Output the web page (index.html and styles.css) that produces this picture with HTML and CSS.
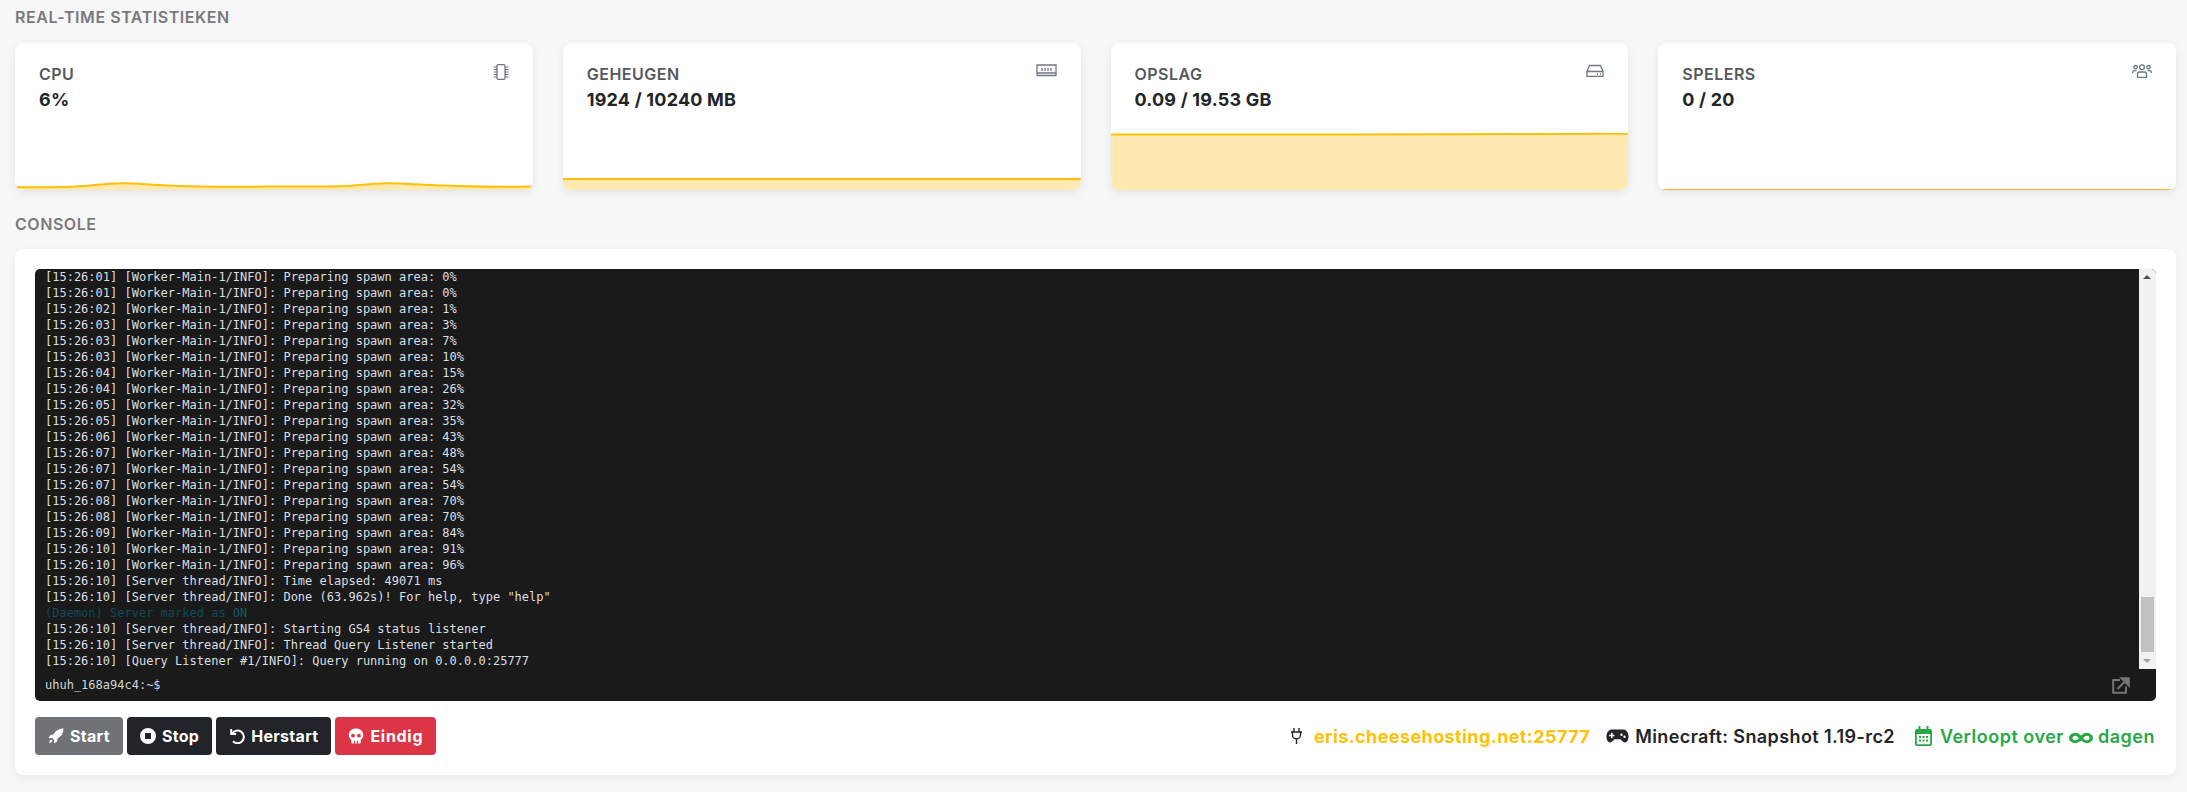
FILE: index.html
```html
<!DOCTYPE html>
<html lang="nl">
<head>
<meta charset="utf-8">
<title>Console</title>
<link rel="stylesheet" href="styles.css">
</head>
<body>
<main class="page">
  <h2 class="section-title first">REAL-TIME STATISTIEKEN</h2>
  <section class="stats">
    <article class="stat">
      <div class="stat-head">
        <div><div class="stat-label">CPU</div><div class="stat-value">6%</div></div>
        <svg class="stat-icon" width="16" height="16" viewBox="0 0 16 16"><rect x="4" y="0.700" width="8" height="14.600" rx="1.200"/><path class="pins" d="M0.500 3h3.500M0.500 5.500h3.500M0.500 8h3.500M0.500 10.500h3.500M0.500 13h3.500M12 3h3.500M12 5.500h3.500M12 8h3.500M12 10.500h3.500M12 13h3.500"/></svg>
      </div>
      <svg class="chart" viewBox="0 0 518 57" preserveAspectRatio="none"><path class="area" d="M0 54C30 54.500 60 54.500 80 52C95 50.200 110 49.800 125 50.800C150 53 190 54.500 250 53.500C290 53.300 325 54.500 345 52C360 50.200 375 49.800 395 51C430 53 470 54.500 518 53.500V57H0Z"/><path class="line" d="M0 54C30 54.500 60 54.500 80 52C95 50.200 110 49.800 125 50.800C150 53 190 54.500 250 53.500C290 53.300 325 54.500 345 52C360 50.200 375 49.800 395 51C430 53 470 54.500 518 53.500"/></svg>
    </article>
    <article class="stat">
      <div class="stat-head">
        <div><div class="stat-label">GEHEUGEN</div><div class="stat-value">1924 / 10240 MB</div></div>
        <svg class="stat-icon" width="21" height="13" viewBox="0 0 21 13"><path d="M1 1h19v8H1zM1 11.500h19M1 9v3M20 9v3M6 4v3M9 4v3M12 4v3M15 4v3"/></svg>
      </div>
      <svg class="chart" viewBox="0 0 518 57" preserveAspectRatio="none"><path class="area" d="M0 46H518V57H0Z"/><path class="line" d="M0 46H518"/></svg>
    </article>
    <article class="stat">
      <div class="stat-head">
        <div><div class="stat-label">OPSLAG</div><div class="stat-value">0.09 / 19.53 GB</div></div>
        <svg class="stat-icon" width="18" height="13" viewBox="0 0 18 13"><path d="M1 7.500 3.500 1.500h11L17 7.500M1 7.500h16v4.800H1zM11 10h1M14 10h1"/></svg>
      </div>
      <svg class="chart" viewBox="0 0 518 57" preserveAspectRatio="none"><path class="area" d="M0 1.500C100 1.500 180 1.600 240 1.500C300 0.800 400 0.700 518 0.700V57H0Z"/><path class="line" d="M0 1.500C100 1.500 180 1.600 240 1.500C300 0.800 400 0.700 518 0.700"/></svg>
    </article>
    <article class="stat">
      <div class="stat-head">
        <div><div class="stat-label">SPELERS</div><div class="stat-value">0 / 20</div></div>
        <svg class="stat-icon" width="20" height="14" viewBox="0 0 20 14"><circle cx="10" cy="3.200" r="2.400"/><circle cx="3.500" cy="3.200" r="1.700"/><circle cx="16.500" cy="3.200" r="1.700"/><path d="M5.500 13.300v-3c0-1.500 1-2.300 2.300-2.300h4.400c1.300 0 2.300.8 2.300 2.300v3zM.7 9V8.300C.7 7.200 1.500 6.700 2.500 6.700h2M19.300 9V8.300c0-1.100-.8-1.600-1.800-1.600h-2"/></svg>
      </div>
      <svg class="chart" viewBox="0 0 518 57" preserveAspectRatio="none"><path class="thin" d="M0 56.500H518"/></svg>
    </article>
  </section>

  <h2 class="section-title second">CONSOLE</h2>
  <section class="console-card">
    <div class="terminal">
      <div class="term-body">
        <div class="log">
          <div>[15:26:01] [Worker-Main-1/INFO]: Preparing spawn area: 0%</div>
          <div>[15:26:01] [Worker-Main-1/INFO]: Preparing spawn area: 0%</div>
          <div>[15:26:02] [Worker-Main-1/INFO]: Preparing spawn area: 1%</div>
          <div>[15:26:03] [Worker-Main-1/INFO]: Preparing spawn area: 3%</div>
          <div>[15:26:03] [Worker-Main-1/INFO]: Preparing spawn area: 7%</div>
          <div>[15:26:03] [Worker-Main-1/INFO]: Preparing spawn area: 10%</div>
          <div>[15:26:04] [Worker-Main-1/INFO]: Preparing spawn area: 15%</div>
          <div>[15:26:04] [Worker-Main-1/INFO]: Preparing spawn area: 26%</div>
          <div>[15:26:05] [Worker-Main-1/INFO]: Preparing spawn area: 32%</div>
          <div>[15:26:05] [Worker-Main-1/INFO]: Preparing spawn area: 35%</div>
          <div>[15:26:06] [Worker-Main-1/INFO]: Preparing spawn area: 43%</div>
          <div>[15:26:07] [Worker-Main-1/INFO]: Preparing spawn area: 48%</div>
          <div>[15:26:07] [Worker-Main-1/INFO]: Preparing spawn area: 54%</div>
          <div>[15:26:07] [Worker-Main-1/INFO]: Preparing spawn area: 54%</div>
          <div>[15:26:08] [Worker-Main-1/INFO]: Preparing spawn area: 70%</div>
          <div>[15:26:08] [Worker-Main-1/INFO]: Preparing spawn area: 70%</div>
          <div>[15:26:09] [Worker-Main-1/INFO]: Preparing spawn area: 84%</div>
          <div>[15:26:10] [Worker-Main-1/INFO]: Preparing spawn area: 91%</div>
          <div>[15:26:10] [Worker-Main-1/INFO]: Preparing spawn area: 96%</div>
          <div>[15:26:10] [Server thread/INFO]: Time elapsed: 49071 ms</div>
          <div>[15:26:10] [Server thread/INFO]: Done (63.962s)! For help, type "help"</div>
          <div class="daemon">(Daemon) Server marked as <b>ON</b></div>
          <div>[15:26:10] [Server thread/INFO]: Starting GS4 status listener</div>
          <div>[15:26:10] [Server thread/INFO]: Thread Query Listener started</div>
          <div>[15:26:10] [Query Listener #1/INFO]: Query running on 0.0.0.0:25777</div>
        </div>
        <div class="scrollbar">
          <span class="arrow up"></span>
          <span class="track"><span class="thumb"></span></span>
          <span class="arrow down"></span>
        </div>
      </div>
      <div class="prompt">
        <span>uhuh_168a94c4:~$</span>
        <svg class="popout" width="18" height="17" viewBox="0 0 18 17"><path d="M8 3H1.200v12.800H14V9.500"/><path d="M5.500 12 15 2.500M9.500 1.200h7.300v7.300z"/></svg>
      </div>
    </div>
    <div class="toolbar">
      <div class="buttons">
        <button class="btn btn-muted"><svg width="16" height="16" viewBox="0 0 16 16"><path d="M15.500.5C10.500.5 7.500 3 5.500 6.500L2.500 7 .5 10H4.300L6 11.700V15.500L9 13.500 9.500 10.500C13 8.500 15.500 5.500 15.500.5Z"/><path d="M3.200 11.500C2 12 1.200 13.500 1 15 2.500 14.800 4 14 4.500 12.800Z"/></svg>Start</button>
        <button class="btn btn-dark"><svg width="16" height="16" viewBox="0 0 16 16"><path fill-rule="evenodd" d="M8 0a8 8 0 1 0 0 16A8 8 0 0 0 8 0zM5.300 5h5.400c.2 0 .3.100.3.300v5.400c0 .2-.1.300-.3.300H5.300c-.2 0-.3-.1-.3-.3V5.300c0-.2.100-.3.300-.3z"/></svg>Stop</button>
        <button class="btn btn-dark"><svg class="undo" width="16" height="16" viewBox="0 0 16 16"><path d="M3.200 5.500A6.300 6.300 0 1 1 4 13.300"/><path d="M2.200 1v5h5"/></svg>Herstart</button>
        <button class="btn btn-red"><svg width="16" height="16" viewBox="0 0 16 16"><path fill-rule="evenodd" d="M8 .5C3.900.5.800 3.200.800 6.900c0 2.100 1 3.800 2.500 4.900v2.600c0 .6.400 1.100 1 1.100h7.400c.6 0 1-.5 1-1.100v-2.600c1.500-1.100 2.500-2.800 2.500-4.900C15.200 3.200 12.100.5 8 .5zM5 5.800a1.900 1.900 0 1 1 0 3.800 1.900 1.900 0 0 1 0-3.800zm6 0a1.900 1.900 0 1 1 0 3.800 1.900 1.900 0 0 1 0-3.800zM6 12.800h1v2.700H6zM9 12.800h1v2.700H9z"/></svg>Eindig</button>
      </div>
      <div class="info">
        <span class="info-item">
          <svg class="plug" width="13" height="18" viewBox="0 0 13 18"><path d="M4 1v4M9 1v4M1 5h11M2.500 5v3a4 4 0 0 0 8 0V5M6.500 12v5"/></svg>
          <span class="address">eris.cheesehosting.net:25777</span>
        </span>
        <span class="info-item">
          <svg width="23" height="14" viewBox="0 0 23 14"><path fill-rule="evenodd" d="M6 .5h11c3 0 5 2.500 5.500 6 .4 3-1 7-3.500 7-2 0-3-2-4.500-3.200h-6C7 11.500 6 13.500 4 13.500 1.500 13.500.1 9.500.5 6.500 1 3 3 .5 6 .5zM5 3.800v1.900H3.100v1.600H5v1.900h1.600V7.300h1.900V5.700H6.600V3.800zM15.500 4.500a1.200 1.200 0 1 0 0 2.400 1.200 1.200 0 0 0 0-2.400zM18.500 6.500a1.200 1.200 0 1 0 0 2.400 1.200 1.200 0 0 0 0-2.400z"/></svg>
          <span>Minecraft: Snapshot 1.19-rc2</span>
        </span>
        <span class="info-item expiry">
          <svg class="cal" width="17" height="20" viewBox="0 0 17 20"><path class="cal-fill" d="M3.500 0h2v3h6V0h2v3H15a2 2 0 0 1 2 2v13a2 2 0 0 1-2 2H2a2 2 0 0 1-2-2V5a2 2 0 0 1 2-2h1.500zM1.800 8v10c0 .2 0 .3.200.3h13c.2 0 .2-.1.200-.3V8zM4 10h2v2H4zM7.500 10h2v2h-2zM11 10h2v2h-2zM4 13.500h2v2H4zM7.500 13.500h2v2h-2zM11 13.500h2v2h-2z"/></svg>
          <span>Verloopt over <svg class="inf" width="24" height="14" viewBox="0 0 18 13" preserveAspectRatio="none"><path d="M5 3C2.500 3 1.300 4.800 1.300 6.500S2.500 10 5 10C8 10 10 3 13 3 15.500 3 16.700 4.800 16.700 6.500S15.500 10 13 10C10 10 8 3 5 3Z"/></svg> dagen</span>
        </span>
      </div>
    </div>
  </section>
</main>
</body>
</html>
```
FILE: styles.css
```css
* { box-sizing: border-box; }
html, body { margin: 0; height: 100%; }
body {
  background: #f7f7f7;
  font-family: Inter, "Liberation Sans", sans-serif;
  color: #212529;
  overflow: hidden;
}
.page { padding: 7px 11px 0 15px; }
.section-title {
  margin: 0;
  height: 20px;
  line-height: 20px;
  font-size: 16px;
  font-weight: 600;
  letter-spacing: .55px;
  color: #777a7d;
}
.section-title.first { margin-bottom: 16px; }
.section-title.second { margin-top: 24px; margin-bottom: 15px; }
.stats {
  display: grid;
  grid-template-columns: repeat(4, 1fr);
  column-gap: 30px;
}
.stat {
  height: 147px;
  display: flex;
  flex-direction: column;
  background: #fff;
  border-radius: 8px;
  overflow: hidden;
  box-shadow: 0 3px 8px rgba(0, 0, 0, .08);
}
.stat-head {
  height: 90px;
  flex: none;
  padding: 21px 24px 0;
  display: flex;
  justify-content: space-between;
  align-items: flex-start;
}
.stat-label {
  font-size: 16px;
  line-height: 20px;
  font-weight: 600;
  letter-spacing: .5px;
  color: #55595d;
}
.stat-value {
  margin-top: 6px;
  font-size: 18px;
  line-height: 20px;
  font-weight: 700;
  letter-spacing: .2px;
  color: #212529;
}
.stat-icon {
  fill: none;
  stroke: #6d7885;
  stroke-width: 1.300;
  flex: none;
}
.stat-icon .pins { stroke-width: 1; }
.chart { display: block; width: 100%; height: 57px; flex: none; }
.area { fill: #fee9b0; stroke: none; }
.line { fill: none; stroke: #ffc107; stroke-width: 2; vector-effect: non-scaling-stroke; }
.thin { fill: none; stroke: #f6b52a; stroke-width: 1; vector-effect: non-scaling-stroke; }

.console-card {
  height: 526px;
  padding: 20px 20px 20px;
  background: #fff;
  border-radius: 8px;
  box-shadow: 0 3px 8px rgba(0, 0, 0, .06);
}
.terminal {
  background: #1a1a1a;
  border-radius: 5px;
  overflow: hidden;
  font-family: "DejaVu Sans Mono", "Liberation Mono", monospace;
  font-size: 12px;
  color: #d9dfe3;
}
.term-body { display: flex; height: 400px; }
.log {
  flex: 1;
  padding: 0 10px;
  line-height: 16px;
  overflow: hidden;
}
.log div { white-space: nowrap; }
.log .daemon { color: #0e4a55; }
.daemon b { font-weight: 400; color: #0f5c68; }
.scrollbar {
  width: 17px;
  flex: none;
  display: flex;
  flex-direction: column;
  background: #f1f1f1;
}
.arrow { display: block; height: 17px; flex: none; position: relative; }
.arrow::before {
  content: "";
  position: absolute;
  left: 4px;
  border-left: 4px solid transparent;
  border-right: 4px solid transparent;
}
.arrow.up::before { top: 6px; border-bottom: 4px solid #505050; }
.arrow.down::before { top: 7px; border-top: 4px solid #a3a3a3; }
.track { flex: 1; display: flex; flex-direction: column; justify-content: flex-end; }
.thumb { display: block; height: 55px; margin: 0 2px; background: #c1c1c1; }
.prompt {
  height: 32px;
  padding: 0 26px 0 10px;
  display: flex;
  align-items: center;
  justify-content: space-between;
  color: #d0d4d8;
}
.popout { fill: none; stroke: #757575; stroke-width: 2; flex: none; }
.popout path:last-child { fill: #757575; }

.toolbar {
  margin-top: 16px;
  display: flex;
  align-items: center;
  justify-content: space-between;
}
.buttons { display: flex; gap: 4px; }
.btn {
  height: 38px;
  padding: 0 13px;
  display: inline-flex;
  align-items: center;
  gap: 6px;
  border: 0;
  border-radius: 4px;
  color: #fff;
  font: 700 16px Inter, "Liberation Sans", sans-serif;
  letter-spacing: .3px;
}
.btn svg { fill: #fff; flex: none; }
.btn svg.undo { fill: none; stroke: #fff; stroke-width: 2; }
.btn-muted { background: #707376; }
.btn-dark { background: #212529; }
.btn-red { background: #dc3545; letter-spacing: .7px; }
.info {
  display: flex;
  align-items: center;
  gap: 16px;
  padding-right: 1px;
  font-size: 18px;
  font-weight: 600;
  letter-spacing: .4px;
  color: #212529;
}
.info-item { display: inline-flex; align-items: center; gap: 6px; white-space: nowrap; }
.info-item svg { flex: none; fill: #212529; }
.info-item svg.plug { fill: none; stroke: #212529; stroke-width: 1.400; margin-right: 5px; }
.address { color: #ffc107; font-weight: 700; }
.expiry { color: #28a745; margin-left: 4px; letter-spacing: .5px; }
.info-item svg.cal { margin-right: 2px; }
.cal-fill { fill: #28a745; fill-rule: evenodd; }
.info-item svg.inf { display: inline-block; vertical-align: -2px; fill: none; stroke: #28a745; stroke-width: 2.600; }
```
